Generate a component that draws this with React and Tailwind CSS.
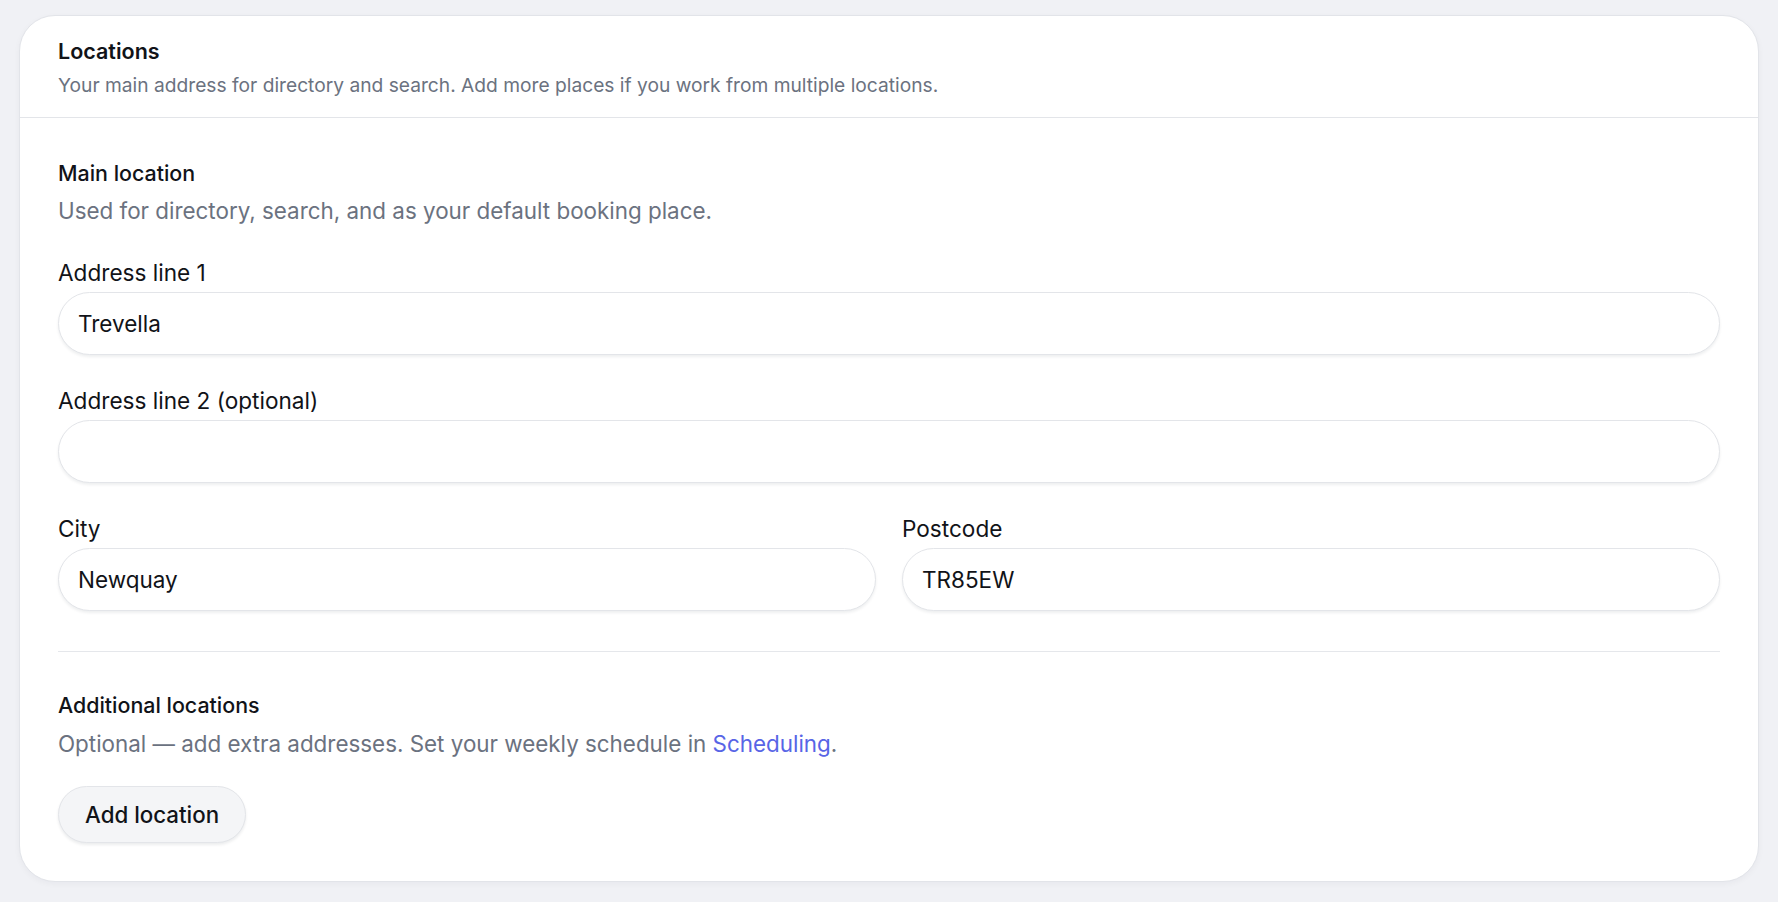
import React, { useState } from 'react'

function Field({ label, value, onChange }) {
  return (
    <label className="flex flex-col">
      <span className="text-[22.6px] leading-[30px] text-[#111318]">{label}</span>
      <input
        value={value}
        onChange={(e) => onChange(e.target.value)}
        className="mt-[4px] h-[63px] w-full rounded-full border border-[#e3e5e9] bg-white px-[19px] text-[22.5px] text-[#111318] shadow-[0_2px_3px_rgba(16,24,40,0.07)] outline-none"
      />
    </label>
  )
}

export default function App() {
  const [form, setForm] = useState({
    line1: 'Trevella',
    line2: '',
    city: 'Newquay',
    postcode: 'TR85EW',
  })

  const set = (key) => (v) => setForm((f) => ({ ...f, [key]: v }))

  return (
    <div className="min-h-screen bg-[#f0f1f5] px-[19px] pt-[15px] pb-[20px] font-['Inter',sans-serif] antialiased">
      <section className="rounded-[36px] border border-[#e2e4e9] bg-white shadow-[0_2px_6px_rgba(16,24,40,0.04)]">
        <header className="border-b border-[#e3e5e9] px-[38px] pt-[21px] pb-[19px]">
          <h2 className="text-[21.5px] leading-[28px] font-semibold text-[#111318]">Locations</h2>
          <p className="mt-[7px] text-[19.2px] leading-[26px] text-[#6b7280]">
            Your main address for directory and search. Add more places if you work from multiple locations.
          </p>
        </header>

        <div className="px-[38px] pt-[40px] pb-[38px]">
          <h3 className="text-[21.4px] leading-[30px] font-medium text-[#111318]">Main location</h3>
          <p className="mt-[8px] text-[22.4px] leading-[30px] text-[#6b7280]">
            Used for directory, search, and as your default booking place.
          </p>

          <div className="mt-[32px] flex flex-col gap-[31px]">
            <Field label="Address line 1" value={form.line1} onChange={set('line1')} />
            <Field label="Address line 2 (optional)" value={form.line2} onChange={set('line2')} />
            <div className="grid grid-cols-2 gap-[26px]">
              <Field label="City" value={form.city} onChange={set('city')} />
              <Field label="Postcode" value={form.postcode} onChange={set('postcode')} />
            </div>
          </div>

          <div className="mt-[40px] border-t border-[#e5e7eb]" />

          <h3 className="mt-[38px] text-[21.4px] leading-[30px] font-medium text-[#111318]">Additional locations</h3>
          <p className="mt-[9px] text-[22.4px] leading-[30px] text-[#6b7280]">
            Optional — add extra addresses. Set your weekly schedule in{' '}
            <a href="#" className="text-[#5865e6]">Scheduling</a>.
          </p>

          <button className="mt-[27px] h-[57px] rounded-full border border-[#e3e5e9] bg-[#f4f5f7] px-[26px] text-[22.3px] font-medium text-[#111318] shadow-[0_2px_3px_rgba(16,24,40,0.08)]">
            Add location
          </button>
        </div>
      </section>
    </div>
  )
}
